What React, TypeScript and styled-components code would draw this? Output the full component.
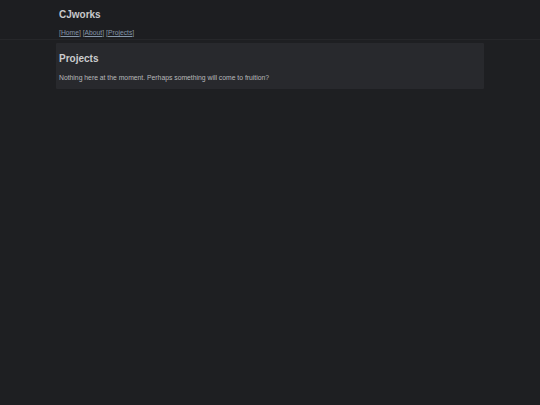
import React from "react";
import styled, { createGlobalStyle } from "styled-components";

const Global = createGlobalStyle`
  html, body { margin: 0; padding: 0; background: #1e1f22; }
  body { font-family: "Liberation Sans", Arial, sans-serif; color: #c9cacc; min-height: 405px; }
`;

const Header = styled.header`
  border-bottom: 1px solid #26272a;
  background: #1d1e21;
`;

const Container = styled.div`
  width: 428px;
  margin: 0 auto;
  box-sizing: border-box;
  padding: 0 3px;
`;

const HeaderInner = styled(Container)`
  padding-top: 9px;
  padding-bottom: 2px;
`;

const Title = styled.h1`
  margin: 0 0 8px;
  font-size: 10px;
  line-height: 12px;
  font-weight: bold;
  color: #c8c9cb;
`;

const Nav = styled.nav`
  font-size: 6.75px;
  line-height: 8px;
  color: #939599;
`;

const NavLink = styled.a`
  color: #8496ab;
  text-decoration: underline;
`;

const Card = styled.main`
  width: 428px;
  margin: 3px auto 0;
  box-sizing: border-box;
  padding: 10px 3px 7px;
  background: #28292d;
  border-radius: 1px;
`;

const Heading = styled.h2`
  margin: 0 0 9px;
  font-size: 10px;
  line-height: 12px;
  font-weight: bold;
  color: #cbccce;
`;

const Text = styled.p`
  margin: 0;
  font-size: 6.8px;
  line-height: 8px;
  color: #b8b9bc;
`;

export default function App() {
  const links = ["Home", "About", "Projects"];
  return (
    <>
      <Global />
      <Header>
        <HeaderInner>
          <Title>CJworks</Title>
          <Nav>
            {links.map((l, i) => (
              <React.Fragment key={l}>
                {i > 0 ? " " : ""}[<NavLink href="#">{l}</NavLink>]
              </React.Fragment>
            ))}
          </Nav>
        </HeaderInner>
      </Header>
      <Card>
        <Heading>Projects</Heading>
        <Text>Nothing here at the moment. Perhaps something will come to fruition?</Text>
      </Card>
    </>
  );
}
